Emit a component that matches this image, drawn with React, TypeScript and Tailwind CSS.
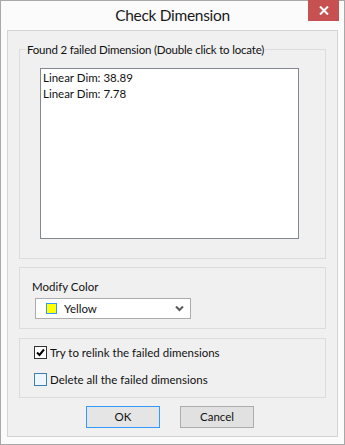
import React, { useState } from 'react';

const font = { fontFamily: 'Lato, "Noto Sans", "Liberation Sans", sans-serif' };

const failed = ['Linear Dim: 38.89', 'Linear Dim: 7.78'];

function CheckBox({ checked, hover, label }: { checked: boolean; hover?: boolean; label: string }) {
  return (
    <label className="flex items-center h-[13px]">
      <span
        className={
          'w-[13px] h-[13px] border flex items-center justify-center ' +
          (hover ? 'border-[#3c7fb1] bg-[#eef6fd]' : 'border-[#333333] bg-white')
        }
      >
        {checked && (
          <svg width="9" height="9" viewBox="0 0 9 9">
            <path d="M1 4.5 L3.5 7 L8 1.5" stroke="#000" strokeWidth="2" fill="none" />
          </svg>
        )}
      </span>
      <span className="ml-[3px]">{label}</span>
    </label>
  );
}

export default function App() {
  const [selected] = useState<number | null>(null);

  return (
    <div
      className="w-[345px] h-[445px] bg-[#fbfbfb] border border-[#a8a8a8] flex flex-col text-[11.5px] text-[#111]"
      style={font}
    >
      {/* title bar */}
      <div className="h-[29px] relative flex items-center justify-center shrink-0">
        <span className="text-[15.5px] tracking-[-0.3px] text-[#1a1a1a] leading-none mt-[1px]">Check Dimension</span>
        <div className="absolute top-[-1px] right-[5px] w-[31px] h-[21px] bg-[#c75050] flex items-center justify-center">
          <svg width="10" height="9" viewBox="0 0 10 9">
            <path d="M1 0.5 L9 8.5 M9 0.5 L1 8.5" stroke="#fff" strokeWidth="2" />
          </svg>
        </div>
      </div>

      {/* client area */}
      <div className="mx-[6px] w-[331px] h-[407px] border border-[#d4d4d4] bg-[#f0f0f0] px-[11px] pt-[11px] flex flex-col">
        <fieldset className="border border-[#dcdcdc] h-[217px] m-0 px-[20px] pt-[11px] pb-[20px]">
          <legend className="ml-[-14px] px-[1px] leading-[15px] whitespace-nowrap tracking-[-0.2px]">
            Found 2 failed Dimension (Double click to locate)
          </legend>
          <div className="w-[259px] h-[171px] bg-white border border-[#828790] px-[2px] pt-[1px]">
            {failed.map((f, i) => (
              <div key={i} className={'leading-[16px] ' + (selected === i ? 'bg-[#3399ff] text-white' : '')}>
                {f}
              </div>
            ))}
          </div>
        </fieldset>

        <div className="mt-[8px] h-[62px] border border-[#dcdcdc] pl-[12px] pt-[11px]">
          <div className="leading-[15px]">Modify Color</div>
          <div className="mt-[4px] ml-[3px] w-[156px] h-[21px] bg-white border border-[#acacac] flex items-center pl-[10px] pr-[6px]">
            <span className="w-[11px] h-[11px] border border-[#3399ff] bg-[#ffff00]" />
            <span className="ml-[7px] flex-1">Yellow</span>
            <svg width="9" height="7" viewBox="0 0 9 7">
              <path d="M1 1.5 L4.5 5 L8 1.5" stroke="#5a5a5a" strokeWidth="2" fill="none" />
            </svg>
          </div>
        </div>

        <div className="mt-[9px] h-[60px] border border-[#dcdcdc] pl-[14px] pt-[7px] flex flex-col gap-[14px]">
          <CheckBox checked label="Try to relink the failed dimensions" />
          <CheckBox checked={false} hover label="Delete all the failed dimensions" />
        </div>

        <div className="mt-[8px] flex justify-center gap-[20px] pr-[5px]">
          <button className="w-[74px] h-[22px] border border-[#3399ff] bg-[#e5e5e5]">OK</button>
          <button className="w-[74px] h-[22px] border border-[#acacac] bg-[#e1e1e1]">Cancel</button>
        </div>
      </div>
    </div>
  );
}
